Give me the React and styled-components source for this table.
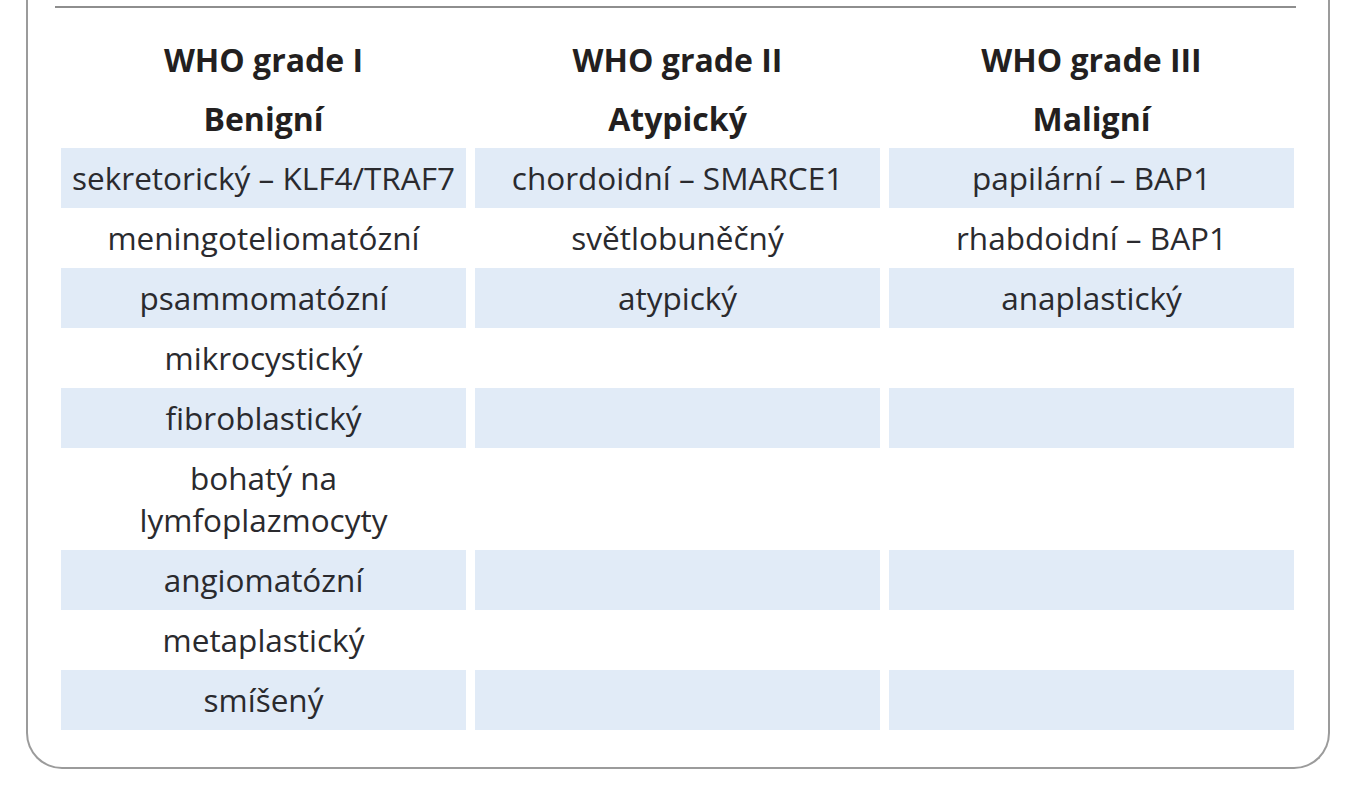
import React from 'react';
import styled, { createGlobalStyle } from 'styled-components';

const GlobalStyle = createGlobalStyle`
  body {
    margin: 0;
    background: #ffffff;
    font-family: 'Open Sans', 'Noto Sans', sans-serif;
    color: #2a2a2e;
  }
`;

const Card = styled.div`
  margin: 0 24px 0 26px;
  border: 2px solid #9b9b9b;
  border-top: none;
  border-radius: 0 0 36px 36px;
  padding: 6px 0 37px;
  background: #fff;
`;

const Rule = styled.div`
  height: 2px;
  background: #8e8e8e;
  margin: 0 32px 22px 27px;
`;

const Table = styled.div`
  display: grid;
  grid-template-columns: repeat(3, 1fr);
  column-gap: 9px;
  margin: 0 34px 0 33px;
`;

const HeadCell = styled.div`
  font-weight: 700;
  font-size: 32px;
  line-height: 42px;
  padding: ${p => (p.$top ? '9px 0' : '8px 0')};
  text-align: center;
  color: #231f20;
`;

const Cell = styled.div`
  font-size: 31.5px;
  line-height: 42px;
  padding: 9px 0;
  text-align: center;
  white-space: nowrap;
  background: ${p => (p.$shaded ? '#e1ebf7' : 'transparent')};
`;

const headers = [
  ['WHO grade I', 'Benigní'],
  ['WHO grade II', 'Atypický'],
  ['WHO grade III', 'Maligní'],
];

const rows = [
  ['sekretorický – KLF4/TRAF7', 'chordoidní – SMARCE1', 'papilární – BAP1'],
  ['meningoteliomatózní', 'světlobuněčný', 'rhabdoidní – BAP1'],
  ['psammomatózní', 'atypický', 'anaplastický'],
  ['mikrocystický', '', ''],
  ['fibroblastický', '', ''],
  ['bohatý na lymfoplazmocyty', '', ''],
  ['angiomatózní', '', ''],
  ['metaplastický', '', ''],
  ['smíšený', '', ''],
];

export default function App() {
  return (
    <>
      <GlobalStyle />
      <Card>
        <Rule />
        <Table>
          {headers.map(h => (
            <HeadCell key={h[0]} $top>{h[0]}</HeadCell>
          ))}
          {headers.map(h => (
            <HeadCell key={h[1]}>{h[1]}</HeadCell>
          ))}
          {rows.map((row, i) =>
            row.map((text, j) => (
              <Cell key={`${i}-${j}`} $shaded={i % 2 === 0}>
                {i === 5 && j === 0 ? (
                  <>bohatý na<br />lymfoplazmocyty</>
                ) : (
                  text
                )}
              </Cell>
            ))
          )}
        </Table>
      </Card>
    </>
  );
}
